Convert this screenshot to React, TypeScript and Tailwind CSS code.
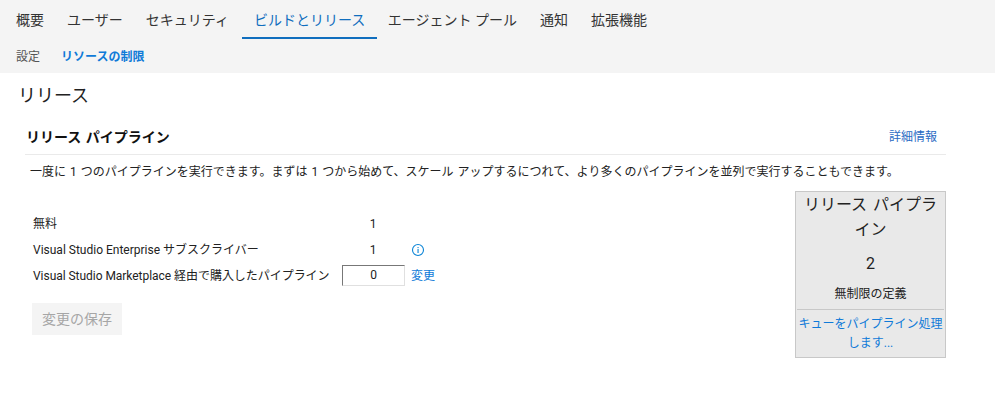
const tabs = ['概要', 'ユーザー', 'セキュリティ', 'ビルドとリリース', 'エージェント プール', '通知', '拡張機能'];

function InfoIcon() {
  return (
    <svg width="14" height="14" viewBox="0 0 14 14" fill="none" className="ml-[7px] text-[#0a84d6]">
      <circle cx="7" cy="7" r="5.5" stroke="currentColor" strokeWidth="1.1" />
      <rect x="6.5" y="6" width="1.1" height="4" fill="currentColor" />
      <rect x="6.5" y="4" width="1.1" height="1.1" fill="currentColor" />
    </svg>
  );
}

export default function App() {
  return (
    <div className="h-[406px] w-[995px] overflow-hidden bg-white text-xs text-[#222] [font-family:'Roboto','Noto_Sans_CJK_JP',sans-serif]">
      <div className="h-[73px] bg-[#f4f4f4]">
        <div className="flex h-[39px] pl-[4.5px]">
          {tabs.map((tab) => (
            <div
              key={tab}
              className={
                tab === 'ビルドとリリース'
                  ? 'ml-[2px] mr-[-1px] flex items-center border-b-2 border-[#106ebe] pl-[11.5px] pr-3 pt-[2px] text-sm text-[#106ebe]'
                  : 'flex items-center border-b-2 border-transparent px-[11.5px] pt-[2px] text-sm text-[#333]'
              }
            >
              {tab}
            </div>
          ))}
        </div>
        <div className="flex items-center gap-[21px] pl-4 pt-[10px]">
          <span className="text-[#555]">設定</span>
          <span className="font-bold text-[#0f7ad8]">リソースの制限</span>
        </div>
      </div>

      <h1 className="pl-[18px] pt-[10px] text-lg leading-[26px] text-[#222]">リリース</h1>

      <div className="ml-[25px] mt-[12px] w-[921px]">
        <div className="flex h-[34px] items-start justify-between border-b border-[#eaeaea] pl-px pr-[9px] pt-[5px]">
          <h2 className="text-sm leading-[22px] font-bold text-[#111] [word-spacing:1px]">リリース パイプライン</h2>
          <a className="leading-[22px] text-[#2b6cc4]">詳細情報</a>
        </div>
        <p className="pl-[5px] pt-[8px] leading-[18px] [word-spacing:1px]">
          一度に 1 つのパイプラインを実行できます。まずは 1 つから始めて、スケール アップするにつれて、より多くのパイプラインを並列で実行することもできます。
        </p>

        <div className="mt-[10px] flex justify-between">
          <div className="pl-2 pt-[20px]">
            <div className="flex h-[26px] items-center">
              <span className="w-[309px]">無料</span>
              <span className="w-[62px] text-center">1</span>
            </div>
            <div className="flex h-[26px] items-center">
              <span className="w-[309px]">Visual Studio Enterprise サブスクライバー</span>
              <span className="w-[62px] text-center">1</span>
              <InfoIcon />
            </div>
            <div className="flex h-[26px] items-center">
              <span className="w-[309px] tracking-[-0.04px]">Visual Studio Marketplace 経由で購入したパイプライン</span>
              <input
                readOnly
                value="0"
                className="mb-[2px] h-[21px] w-[63px] border border-[#e0e0e0] border-t-[#777] border-l-[#777] bg-white text-center text-xs outline-none"
              />
              <a className="ml-[6px] text-[#0f7ad8]">変更</a>
            </div>
            <button className="ml-[-1px] mt-[14px] h-[32px] w-[90px] bg-[#f4f4f4] text-sm text-[#a6a6a6]">変更の保存</button>
          </div>

          <div className="h-[167px] w-[151px] border border-[#c8c8c8] bg-[#e9e9e9] text-center">
            <div className="px-1 text-base leading-[25px] [word-spacing:2px]">リリース パイプライン</div>
            <div className="pt-[10px] text-base leading-[24px]">2</div>
            <div className="pt-[9px] leading-[18px]">無制限の定義</div>
            <div className="mx-[1px] mt-[6px] border-t border-[#c8c8c8] pt-[5px] leading-[19px] text-[#0f7ad8]">
              キューをパイプライン処理
              <br />
              します...
            </div>
          </div>
        </div>
      </div>
    </div>
  );
}
